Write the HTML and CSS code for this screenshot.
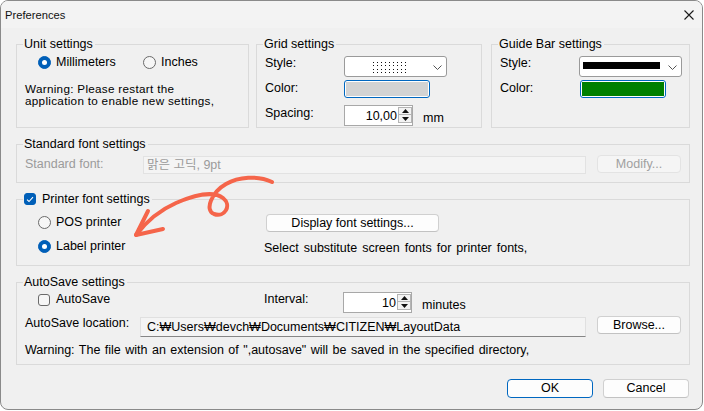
FILE: index.html
```html
<!DOCTYPE html>
<html lang="en">
<head>
<meta charset="utf-8">
<title>Preferences</title>
<link rel="stylesheet" href="styles.css">
</head>
<body>
<div class="window">
  <div class="titlebar">
    <span class="title">Preferences</span>
    <svg class="close" width="10" height="10" viewBox="0 0 10 10"><path d="M0.5 0.5 L9.5 9.5 M9.5 0.5 L0.5 9.5" stroke="#1a1a1a" stroke-width="1.1" fill="none"/></svg>
  </div>
  <div class="content">
    <div class="toprow">
      <fieldset class="group unit">
        <legend>Unit settings</legend>
        <div class="radios">
          <label class="opt w105"><span class="radio on"></span>Millimeters</label>
          <label class="opt"><span class="radio"></span>Inches</label>
        </div>
        <p class="warn"><span class="wl">Warning: Please restart the</span><span class="wl">application to enable new settings,</span></p>
      </fieldset>
      <fieldset class="group gridset">
        <legend>Grid settings</legend>
        <div class="form">
          <div class="frow r1">
            <span class="flabel">Style:</span>
            <div class="combo">
              <span class="cval">
                <svg width="33" height="11" viewBox="0 0 33 11">
                  <defs><pattern id="dots" width="4" height="11" patternUnits="userSpaceOnUse"><rect x="0" y="0" width="1" height="1" fill="#111"/><rect x="0" y="3" width="1" height="1" fill="#111"/><rect x="0" y="7" width="1" height="1" fill="#111"/><rect x="0" y="10" width="1" height="1" fill="#111"/></pattern></defs>
                  <rect width="33" height="11" fill="url(#dots)"/>
                </svg>
              </span>
              <svg class="chev" width="9" height="5" viewBox="0 0 9 5"><path d="M0.5 0.5 L4.5 4.5 L8.5 0.5" stroke="#555" stroke-width="1" fill="none"/></svg>
            </div>
          </div>
          <div class="frow r2">
            <span class="flabel pt1">Color:</span>
            <div class="colorbtn"><span class="swatch grey"></span></div>
          </div>
          <div class="frow r3">
            <span class="flabel pt1">Spacing:</span>
            <div class="spin">
              <span class="sval">10,00</span>
              <span class="spinbtns">
                <span class="sb"><svg width="7" height="4" viewBox="0 0 7 4"><path d="M0 4 L3.5 0 L7 4Z" fill="#111"/></svg></span>
                <span class="sb"><svg width="7" height="4" viewBox="0 0 7 4"><path d="M0 0 L3.5 4 L7 0Z" fill="#111"/></svg></span>
              </span>
            </div>
            <span class="unitlbl">mm</span>
          </div>
        </div>
      </fieldset>
      <fieldset class="group guide">
        <legend>Guide Bar settings</legend>
        <div class="form">
          <div class="frow r1">
            <span class="flabel">Style:</span>
            <div class="combo">
              <span class="cval left"><span class="blackbar"></span></span>
              <svg class="chev" width="9" height="5" viewBox="0 0 9 5"><path d="M0.5 0.5 L4.5 4.5 L8.5 0.5" stroke="#555" stroke-width="1" fill="none"/></svg>
            </div>
          </div>
          <div class="frow r2">
            <span class="flabel pt1">Color:</span>
            <div class="colorbtn g"><span class="swatch green"></span></div>
          </div>
        </div>
      </fieldset>
    </div>

    <fieldset class="group std">
      <legend>Standard font settings</legend>
      <div class="stdrow">
        <span class="dlabel">Standard font:</span>
        <div class="dedit">맑은 고딕, 9pt</div>
        <div class="btn disabled">Modify...</div>
      </div>
    </fieldset>

    <fieldset class="group printer">
      <legend><span class="check on"><svg width="8" height="7" viewBox="0 0 8 7"><path d="M1 3.6 L3 5.5 L7 1.2" stroke="#fff" stroke-width="1.1" fill="none"/></svg></span>Printer font settings</legend>
      <div class="prow">
        <div class="pleft">
          <label class="opt"><span class="radio"></span>POS printer</label>
          <label class="opt second"><span class="radio on"></span>Label printer</label>
        </div>
        <div class="pright">
          <div class="btn dfs">Display font settings...</div>
          <p class="note">Select substitute screen fonts for printer fonts,</p>
        </div>
      </div>
    </fieldset>

    <fieldset class="group autosave">
      <legend>AutoSave settings</legend>
      <div class="arow1">
        <label class="opt acheck"><span class="check"></span>AutoSave</label>
        <span class="flabel">Interval:</span>
        <div class="spin">
          <span class="sval">10</span>
          <span class="spinbtns">
            <span class="sb"><svg width="7" height="4" viewBox="0 0 7 4"><path d="M0 4 L3.5 0 L7 4Z" fill="#111"/></svg></span>
            <span class="sb"><svg width="7" height="4" viewBox="0 0 7 4"><path d="M0 0 L3.5 4 L7 0Z" fill="#111"/></svg></span>
          </span>
        </div>
        <span class="unitlbl">minutes</span>
      </div>
      <div class="arow2">
        <span class="loclabel">AutoSave location:</span>
        <div class="locedit">C:₩Users₩devch₩Documents₩CITIZEN₩LayoutData</div>
        <div class="btn browse">Browse...</div>
      </div>
      <p class="warn2">Warning: The file with an extension of ",autosave" will be saved in the specified directory,</p>
    </fieldset>

    <div class="buttons">
      <div class="btn default">OK</div>
      <div class="btn">Cancel</div>
    </div>
  </div>

  <svg class="annot" width="703" height="410" viewBox="0 0 703 410">
    <g fill="none" stroke="#f5654a" stroke-width="4" stroke-linecap="round" stroke-linejoin="round">
      <path d="M272 182 C258 175 238 177 226 184 C212 192 204 210 214 214 C225 218 232 205 223 198 C213 190 192 196 176 203 C160 210 146 222 136 235"/>
      <path d="M148 211 L136 235 L163 229"/>
    </g>
  </svg>
</div>
</body>
</html>
```

FILE: styles.css
```css
html, body {
  margin: 0;
  padding: 0;
  background: #ffffff;
}

body {
  font-family: "Liberation Sans", "Noto Sans CJK KR", sans-serif;
  font-size: 12.5px;
  line-height: 14px;
  color: #000;
}

.window {
  position: relative;
  box-sizing: border-box;
  width: 703px;
  height: 410px;
  border: 1px solid #8a8a8a;
  border-radius: 8px;
  background: #f0f0f0;
  overflow: hidden;
}

.titlebar {
  height: 27px;
  display: flex;
  align-items: center;
  justify-content: space-between;
  padding: 0 8px 0 4px;
  background: #f3f3f3;
}

.title {
  font-size: 11.2px;
  color: #111;
}

.content {
  padding: 9px 12px 0 15px;
}

.toprow {
  display: flex;
}

.group {
  margin: 0;
  padding: 0;
  border: 1px solid #dadada;
  min-width: 0;
  box-sizing: border-box;
}

legend {
  padding: 0 2px 0 1px;
  margin-left: 6px;
  line-height: 14px;
}

.unit { width: 233px; height: 91px; margin-right: 7px; flex: none; }
.gridset { width: 226px; height: 91px; margin-right: 9px; flex: none; }
.guide { width: 199px; height: 91px; flex: none; }

.radios {
  display: flex;
  padding: 4px 0 0 21px;
}

.opt {
  display: flex;
  align-items: center;
  height: 14px;
  white-space: nowrap;
}

.w105 { width: 105px; }

.radio {
  box-sizing: border-box;
  width: 13px;
  height: 13px;
  border: 1px solid #6a6a6a;
  border-radius: 50%;
  background: #f6f6f6;
  margin-right: 5px;
  flex: none;
  display: flex;
  align-items: center;
  justify-content: center;
}

.radio.on {
  border-color: #005fb8;
  background: #005fb8;
}

.radio.on::after {
  content: "";
  width: 5px;
  height: 5px;
  border-radius: 50%;
  background: #fff;
}

.check {
  box-sizing: border-box;
  width: 12px;
  height: 12px;
  border: 1px solid #6a6a6a;
  border-radius: 3px;
  background: #f6f6f6;
  margin-right: 6px;
  flex: none;
  display: inline-flex;
  align-items: center;
  justify-content: center;
}

.check.on {
  border-color: #005fb8;
  background: #005fb8;
}

.warn {
  margin: 14px 0 0 8px;
  white-space: nowrap;
}

.wl {
  display: block;
  height: 12px;
  line-height: 12px;
  font-size: 11.7px;
  letter-spacing: 0.3px;
}

.wl + .wl { margin-top: 0; }

.form {
  padding: 5px 0 0 8px;
}

.frow {
  display: flex;
  align-items: flex-start;
}

.frow.r2 { margin-top: 3px; }
.frow.r3 { margin-top: 7px; }

.flabel {
  width: 79px;
  flex: none;
  white-space: nowrap;
}

.pt1 { padding-top: 1px; }

.combo {
  box-sizing: border-box;
  width: 103px;
  height: 21px;
  border: 1px solid #9a9a9a;
  border-radius: 3px;
  background: #fff;
  display: flex;
  align-items: center;
}

.cval {
  flex: 1;
  display: flex;
  justify-content: center;
  padding-left: 4px;
  margin-top: 2px;
}

.cval.left {
  justify-content: flex-start;
  padding-left: 3px;
  margin-top: 0;
}

.blackbar {
  width: 77px;
  height: 7px;
  background: #000;
  margin-top: -3px;
}

.chev {
  margin: 1px 4px 0 4px;
  flex: none;
}

.colorbtn {
  box-sizing: border-box;
  width: 86px;
  height: 18px;
  border: 1px solid #0067c0;
  border-radius: 3px;
  padding: 1px;
  background: #fff;
  display: flex;
}

.colorbtn.g { margin-left: 1px; }

.swatch { flex: 1; }
.swatch.grey { background: #d3d3d3; }
.swatch.green { background: #008000; }

.spin {
  box-sizing: border-box;
  width: 69px;
  height: 21px;
  border: 1px solid #a8a8a8;
  background: #fff;
  display: flex;
  align-items: flex-start;
  padding-top: 1px;
  flex: none;
}

.sval {
  flex: 1;
  text-align: right;
  padding-right: 1px;
  padding-top: 2px;
}

.spinbtns {
  display: flex;
  flex-direction: column;
  width: 14px;
}

.sb {
  box-sizing: border-box;
  height: 8px;
  border: 1px solid #b4b4b4;
  background: #f3f3f3;
  display: flex;
  align-items: center;
  justify-content: center;
}

.sb + .sb { border-top: none; height: 8px; }

.unitlbl {
  margin-left: 10px;
  padding-top: 6px;
  white-space: nowrap;
}

.std {
  width: 100%;
  height: 46px;
  margin-top: 9px;
}

.stdrow {
  display: flex;
  align-items: flex-start;
  padding: 5px 0 0 8px;
}

.dlabel {
  width: 118px;
  flex: none;
  color: #9b9b9b;
  padding-top: 1px;
}

.dedit {
  box-sizing: border-box;
  width: 443px;
  height: 18px;
  border: 1px solid #e2e2e2;
  background: #f4f4f4;
  color: #9b9b9b;
  padding: 1px 0 0 3px;
  white-space: nowrap;
  flex: none;
}

.btn {
  box-sizing: border-box;
  width: 86px;
  height: 19px;
  border: 1px solid #d0d0d0;
  border-bottom-color: #c2c2c2;
  border-radius: 4px;
  background: #fdfdfd;
  text-align: center;
  line-height: 17px;
  white-space: nowrap;
  flex: none;
}

.btn.disabled {
  width: 84px;
  height: 18px;
  line-height: 16px;
  margin: -1px 0 0 11px;
  color: #a0a0a0;
  background: #f5f5f5;
  border-color: #e3e3e3;
}

.printer {
  width: 100%;
  height: 74px;
  margin-top: 9px;
}

.printer legend {
  display: flex;
  align-items: center;
}

.prow {
  display: flex;
}

.pleft {
  width: 226px;
  padding: 9px 0 0 21px;
  flex: none;
}

.opt.second { margin-top: 10px; }

.pright {
  padding-top: 8px;
}

.btn.dfs {
  width: 173px;
  height: 18px;
  line-height: 16px;
  margin-left: 2px;
}

.note {
  margin: 9px 0 0 0;
  white-space: nowrap;
  word-spacing: 1.5px;
}

.autosave {
  width: 100%;
  height: 90px;
  margin-top: 9px;
}

.arow1 {
  display: flex;
  align-items: flex-start;
  padding: 3px 0 0 21px;
}

.acheck {
  width: 226px;
  flex: none;
  align-items: flex-start;
}

.acheck .check {
  margin-top: 2px;
}

.arow2 {
  display: flex;
  align-items: flex-start;
  margin-top: 3px;
  padding-left: 8px;
}

.loclabel {
  width: 115px;
  flex: none;
  white-space: nowrap;
}

.locedit {
  box-sizing: border-box;
  width: 446px;
  height: 20px;
  margin-top: 1px;
  border: 1px solid #e0e0e0;
  border-bottom-color: #868686;
  background: #f4f4f4;
  padding: 2px 0 0 6px;
  white-space: nowrap;
  flex: none;
}

.btn.browse {
  width: 84px;
  height: 18px;
  line-height: 16px;
  margin-left: 11px;
}

.warn2 {
  margin: 6px 0 0 8px;
  white-space: nowrap;
  word-spacing: 1px;
}

.buttons {
  display: flex;
  justify-content: flex-end;
  gap: 10px;
  margin-top: 14px;
  padding-right: 1px;
}

.btn.default {
  border-color: #0067c0;
}

.annot {
  position: absolute;
  left: -1px;
  top: -1px;
  pointer-events: none;
}
```
